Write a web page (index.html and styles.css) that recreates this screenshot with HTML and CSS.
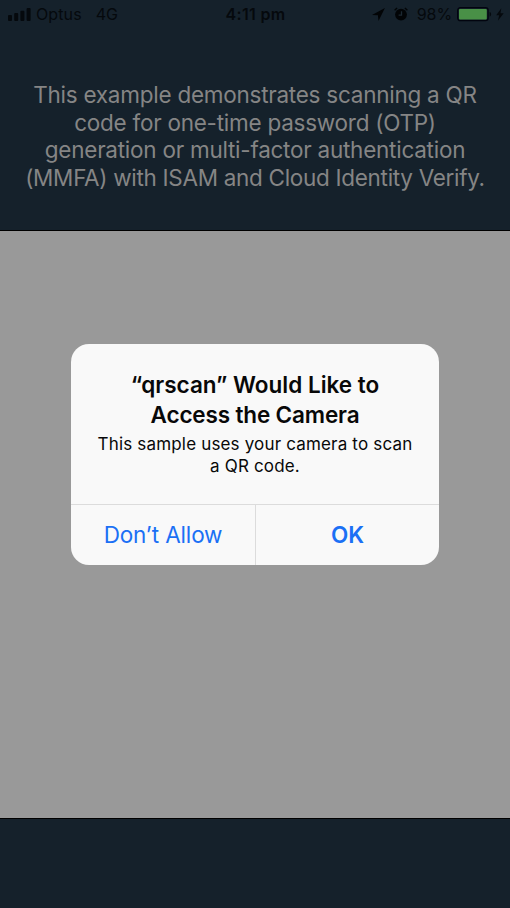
FILE: index.html
```html
<!DOCTYPE html>
<html lang="en">
<head>
<meta charset="utf-8">
<title>qrscan</title>
<link rel="stylesheet" href="styles.css">
</head>
<body>
<div class="screen">
  <header class="top">
    <div class="status">
      <div class="carrier">
        <svg class="signal" width="23" height="13" viewBox="0 0 23 13"><rect x="0" y="7" width="4" height="6" rx="1"/><rect x="6.2" y="5" width="4" height="8" rx="1"/><rect x="12.4" y="2.7" width="4" height="10.3" rx="1"/><rect x="18.6" y="0" width="4" height="13" rx="1"/></svg>
        <span class="operator">Optus</span>
        <span class="network">4G</span>
      </div>
      <span class="clock">4:11 pm</span>
      <div class="indicators">
        <svg class="arrow" width="13" height="13" viewBox="0 0 13 13"><path d="M12.900 0 0 7 5.900 7.200 6.500 12.900Z"/></svg>
        <svg class="alarm" width="14" height="14" viewBox="0 0 14 14"><circle cx="7" cy="7.600" r="5.900"/><path class="bells" d="M.6 3.200 3.100 1M10.900 1l2.500 2.200"/><path class="hands" d="M7.500 4.300v3.800H4.600"/></svg>
        <span class="percent">98%</span>
        <svg class="battery" width="35" height="15" viewBox="0 0 35 15"><rect class="shell" x=".7" y=".7" width="30.4" height="13" rx="2.6"/><rect class="charge" x="2" y="2" width="27.8" height="10.4" rx="1"/><path d="M32.6 5c2 .5 2 4 0 4.600Z"/></svg>
        <svg class="bolt" width="8" height="13" viewBox="0 0 8 13"><path d="M5.300.3.2 7.200h3L1.900 12.700 7.700 5.300H4.500Z"/></svg>
      </div>
    </div>
    <p class="intro">
      <span class="intro-a">This example demonstrates scanning a QR</span>
      <span class="intro-b">code for one-time password (OTP)</span>
      <span class="intro-c">generation or multi-factor authentication</span>
      <span class="intro-d">(MMFA) with ISAM and Cloud Identity Verify.</span>
    </p>
  </header>
  <main class="preview">
    <section class="alert" role="alertdialog">
      <div class="message">
        <h1><span class="title-a">“qrscan” Would Like to</span><span class="title-b">Access the Camera</span></h1>
        <p><span class="body-a">This sample uses your camera to scan</span><span class="body-b">a QR code.</span></p>
      </div>
      <div class="actions">
        <button class="deny"><span>Don’t Allow</span></button>
        <button class="allow"><span>OK</span></button>
      </div>
    </section>
  </main>
  <footer class="bottom"></footer>
</div>
</body>
</html>
```
FILE: styles.css
```css
* { box-sizing: border-box; }
body { margin: 0; font-family: Inter, "Liberation Sans", sans-serif; }
.screen { display: flex; flex-direction: column; height: 908px; background: #15212b; overflow: hidden; }
.top { height: 231px; border-bottom: 1px solid #000; }
.status { display: grid; grid-template-columns: 1fr auto 1fr; align-items: center; height: 28px; padding: 0 7px 0 8px; font-size: 16px; line-height: 20px; color: #05090d; }
.carrier, .indicators { display: flex; align-items: center; }
.indicators { justify-content: flex-end; margin-right: -1px; }
svg { display: block; flex: none; fill: #05090d; }
.arrow { fill: #020406; }
.operator { margin-left: 5px; letter-spacing: .1px; }
.network { margin-left: 14px; }
.clock { font-weight: 600; letter-spacing: .3px; }
.alarm { margin: 0 9px 0 9px; fill: #020406; }
.bells { stroke: #020406; stroke-width: 1.4; }
.hands { fill: none; stroke: #1c2933; stroke-width: 1.3; }
.percent { letter-spacing: -.1px; }
.battery { margin: 0 4px 0 5px; }
.shell { fill: none; stroke: #02040f; stroke-width: 1.3; }
.charge { fill: #499047; }
.intro { margin: 53px 0 0; color: #858585; font-size: 22.5px; line-height: 27.5px; letter-spacing: -.25px; text-align: center; }
.intro-d { letter-spacing: -.3px; }
.intro span, .message span { display: block; white-space: nowrap; }
.preview { display: flex; justify-content: center; height: 587px; padding-top: 113px; background: #999; }
.alert { display: flex; flex-direction: column; width: 368px; height: 221px; border-radius: 18px; background: #f9f9f9; overflow: hidden; color: #080808; }
.message { height: 160px; padding-top: 26px; text-align: center; }
.message h1 { margin: 0; font-size: 22.5px; line-height: 30px; font-weight: 600; }
.title-b { letter-spacing: -.15px; }
.message p { margin: 3px 0 0; font-size: 17px; line-height: 22px; letter-spacing: .17px; }
.actions { display: grid; grid-template-columns: 185px 1fr; flex: 1; border-top: 1px solid #dcdcdc; }
button { border: 0; padding: 0; background: none; font: 400 22.5px/28px Inter, "Liberation Sans", sans-serif; letter-spacing: -.15px; color: #1b70f5; }
.deny { border-right: 1px solid #dcdcdc; }
.allow { font-weight: 600; }
.bottom { flex: 1; border-top: 1px solid #000; }
```
